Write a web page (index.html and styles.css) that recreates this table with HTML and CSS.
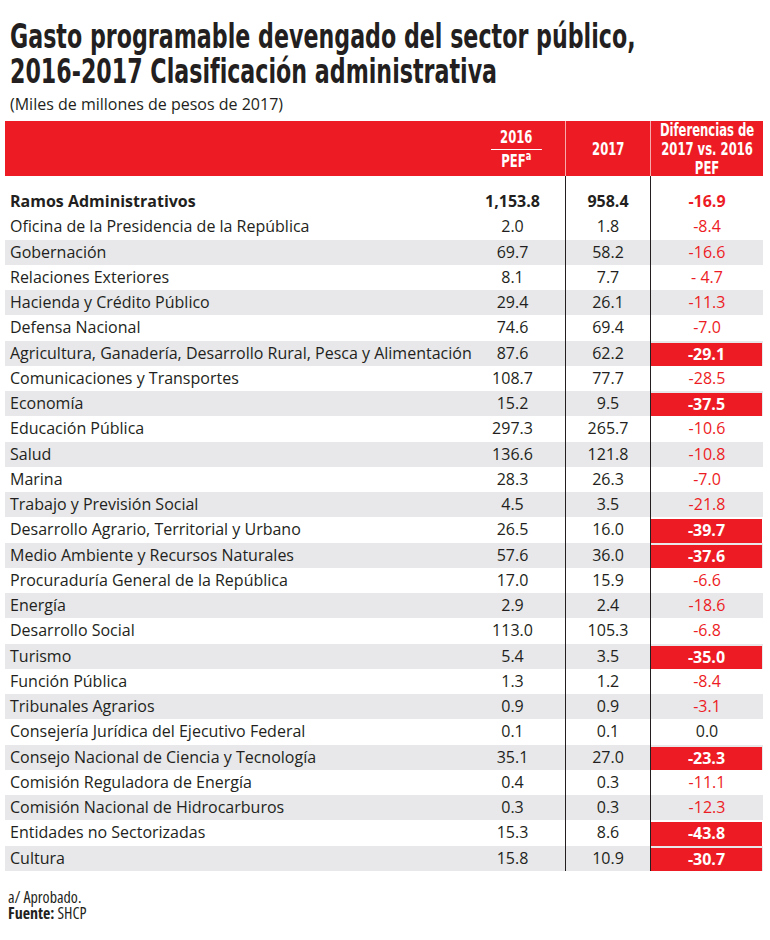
FILE: index.html
```html
<!DOCTYPE html>
<html lang="es">
<head>
<meta charset="utf-8">
<title>Gasto programable</title>
<link rel="stylesheet" href="styles.css">
</head>
<body>
<div class="page">
  <h1 class="title"><span class="tl">Gasto programable devengado del sector público,</span><span class="tl">2016-2017 Clasificación administrativa</span></h1>
  <p class="subtitle">(Miles de millones de pesos de 2017)</p>
  <div class="table">
    <div class="row head">
      <div class="c lab"></div>
      <div class="c y16"><div class="in"><span class="top">2016</span><span class="bot">PEF<sup>a</sup></span></div></div>
      <div class="c y17"><div class="in">2017</div></div>
      <div class="c dif"><div class="in">Diferencias de<br>2017 vs. 2016<br>PEF</div></div>
    </div>
    <div class="row gap"><div class="c lab"></div><div class="c y16"></div><div class="c y17"></div><div class="c dif"></div></div>
    <div class="row bold"><div class="c lab">Ramos Administrativos</div><div class="c y16">1,153.8</div><div class="c y17">958.4</div><div class="c dif neg">-16.9</div></div>
    <div class="row"><div class="c lab">Oficina de la Presidencia de la República</div><div class="c y16">2.0</div><div class="c y17">1.8</div><div class="c dif neg">-8.4</div></div>
    <div class="row alt"><div class="c lab">Gobernación</div><div class="c y16">69.7</div><div class="c y17">58.2</div><div class="c dif neg">-16.6</div></div>
    <div class="row"><div class="c lab">Relaciones Exteriores</div><div class="c y16">8.1</div><div class="c y17">7.7</div><div class="c dif neg">- 4.7</div></div>
    <div class="row alt"><div class="c lab">Hacienda y Crédito Público</div><div class="c y16">29.4</div><div class="c y17">26.1</div><div class="c dif neg">-11.3</div></div>
    <div class="row"><div class="c lab">Defensa Nacional</div><div class="c y16">74.6</div><div class="c y17">69.4</div><div class="c dif neg">-7.0</div></div>
    <div class="row alt"><div class="c lab">Agricultura, Ganadería, Desarrollo Rural, Pesca y Alimentación</div><div class="c y16">87.6</div><div class="c y17">62.2</div><div class="c dif hl"><span>-29.1</span></div></div>
    <div class="row"><div class="c lab">Comunicaciones y Transportes</div><div class="c y16">108.7</div><div class="c y17">77.7</div><div class="c dif neg">-28.5</div></div>
    <div class="row alt"><div class="c lab">Economía</div><div class="c y16">15.2</div><div class="c y17">9.5</div><div class="c dif hl"><span>-37.5</span></div></div>
    <div class="row"><div class="c lab">Educación Pública</div><div class="c y16">297.3</div><div class="c y17">265.7</div><div class="c dif neg">-10.6</div></div>
    <div class="row alt"><div class="c lab">Salud</div><div class="c y16">136.6</div><div class="c y17">121.8</div><div class="c dif neg">-10.8</div></div>
    <div class="row"><div class="c lab">Marina</div><div class="c y16">28.3</div><div class="c y17">26.3</div><div class="c dif neg">-7.0</div></div>
    <div class="row alt"><div class="c lab">Trabajo y Previsión Social</div><div class="c y16">4.5</div><div class="c y17">3.5</div><div class="c dif neg">-21.8</div></div>
    <div class="row"><div class="c lab">Desarrollo Agrario, Territorial y Urbano</div><div class="c y16">26.5</div><div class="c y17">16.0</div><div class="c dif hl"><span>-39.7</span></div></div>
    <div class="row alt"><div class="c lab">Medio Ambiente y Recursos Naturales</div><div class="c y16">57.6</div><div class="c y17">36.0</div><div class="c dif hl"><span>-37.6</span></div></div>
    <div class="row"><div class="c lab">Procuraduría General de la República</div><div class="c y16">17.0</div><div class="c y17">15.9</div><div class="c dif neg">-6.6</div></div>
    <div class="row alt"><div class="c lab">Energía</div><div class="c y16">2.9</div><div class="c y17">2.4</div><div class="c dif neg">-18.6</div></div>
    <div class="row"><div class="c lab">Desarrollo Social</div><div class="c y16">113.0</div><div class="c y17">105.3</div><div class="c dif neg">-6.8</div></div>
    <div class="row alt"><div class="c lab">Turismo</div><div class="c y16">5.4</div><div class="c y17">3.5</div><div class="c dif hl"><span>-35.0</span></div></div>
    <div class="row"><div class="c lab">Función Pública</div><div class="c y16">1.3</div><div class="c y17">1.2</div><div class="c dif neg">-8.4</div></div>
    <div class="row alt"><div class="c lab">Tribunales Agrarios</div><div class="c y16">0.9</div><div class="c y17">0.9</div><div class="c dif neg">-3.1</div></div>
    <div class="row"><div class="c lab">Consejería Jurídica del Ejecutivo Federal</div><div class="c y16">0.1</div><div class="c y17">0.1</div><div class="c dif">0.0</div></div>
    <div class="row alt"><div class="c lab">Consejo Nacional de Ciencia y Tecnología</div><div class="c y16">35.1</div><div class="c y17">27.0</div><div class="c dif hl"><span>-23.3</span></div></div>
    <div class="row"><div class="c lab">Comisión Reguladora de Energía</div><div class="c y16">0.4</div><div class="c y17">0.3</div><div class="c dif neg">-11.1</div></div>
    <div class="row alt"><div class="c lab">Comisión Nacional de Hidrocarburos</div><div class="c y16">0.3</div><div class="c y17">0.3</div><div class="c dif neg">-12.3</div></div>
    <div class="row"><div class="c lab">Entidades no Sectorizadas</div><div class="c y16">15.3</div><div class="c y17">8.6</div><div class="c dif hl"><span>-43.8</span></div></div>
    <div class="row alt"><div class="c lab">Cultura</div><div class="c y16">15.8</div><div class="c y17">10.9</div><div class="c dif hl"><span>-30.7</span></div></div>
  </div>
  <div class="notes">
    <p>a/ Aprobado.</p>
    <p><b>Fuente:</b> SHCP</p>
  </div>
</div>
</body>
</html>
```

FILE: styles.css
```css
html, body {
  margin: 0;
  padding: 0;
  background: #fff;
}
.page {
  padding: 0 7px 0 5px;
  font-family: "Open Sans", sans-serif;
  color: #231f20;
}
.title {
  margin: 0;
  padding: 19px 0 0 5px;
  font-family: "DejaVu Sans Condensed", "DejaVu Sans", sans-serif;
  font-stretch: condensed;
  font-weight: bold;
  font-size: 34px;
  line-height: 35px;
  color: #231f20;
  white-space: nowrap;
}
.title .tl {
  display: block;
  transform: scaleX(0.725);
  transform-origin: left center;
}
.subtitle {
  margin: 5px 0 0 0;
  padding-left: 5px;
  font-size: 16px;
  line-height: 20px;
}
.table {
  margin-top: 7px;
}
.row {
  display: grid;
  grid-template-columns: 455px 106px 85px 112px;
  height: 25.25px;
  font-size: 16px;
  line-height: 25px;
}
.row.alt {
  background: #e8e8ea;
}
.row.bold {
  font-weight: bold;
}
.c {
  text-align: center;
  white-space: nowrap;
}
.c.lab {
  text-align: left;
  padding-left: 5px;
}
.c.y16, .c.y17 {
  border-right: 1px solid #231f20;
}
.row.gap {
  height: 13px;
}
.row.head {
  height: 55px;
  background: #ed1c24;
  color: #fff;
  font-family: "DejaVu Sans Condensed", "DejaVu Sans", sans-serif;
  font-stretch: condensed;
  font-weight: bold;
  font-size: 17px;
  line-height: 19px;
}
.row.head .c {
  display: flex;
  align-items: center;
  justify-content: center;
}
.row.head .in {
  display: flex;
  flex-direction: column;
  align-items: center;
  transform: scaleX(0.76);
  transform-origin: center center;
}
.row.head .c.dif .in {
  display: block;
  text-align: center;
  line-height: 19px;
}
.row.head .c.y16, .row.head .c.y17 {
  border-right-color: #f7a9ac;
}
.row.head .c.y16 .in {
  margin-left: 8px;
}
.row.head .top {
  padding: 0 12px 2px;
  border-bottom: 1px solid #fff;
  margin-bottom: 2px;
}
.row.head sup {
  font-size: 12px;
  line-height: 0;
}
.c.neg {
  color: #ed1c24;
}
.c.hl {
  padding-top: 2px;
}
.c.hl span {
  display: block;
  height: 100%;
  background: #ed1c24;
  color: #fff;
  font-weight: bold;
  line-height: 22px;
  margin-right: 1px;
}
.notes {
  margin-top: 18px;
  padding-left: 3px;
  font-family: "Open Sans", sans-serif;
  font-stretch: 75%;
  font-size: 16px;
  line-height: 16px;
}
.notes p {
  margin: 0;
}
```
